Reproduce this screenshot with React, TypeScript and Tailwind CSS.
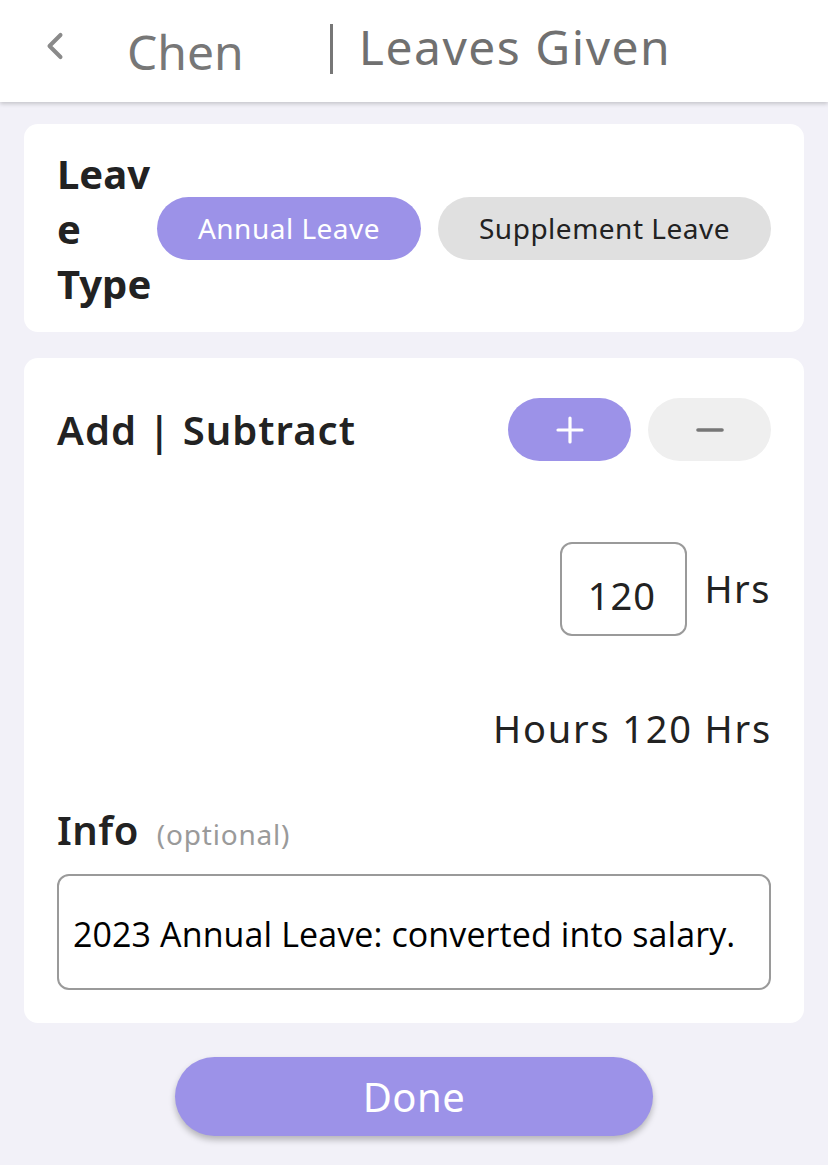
import { ChevronLeft } from "lucide-react"

export default function App() {
  const font = { fontFamily: '"Noto Sans", "Open Sans", sans-serif' }

  return (
    <div className="min-h-[1165px] w-[828px] bg-[#f2f1f8]" style={font}>
      {/* header */}
      <div className="h-[102px] bg-white shadow-[0_2px_4px_rgba(0,0,0,0.18)] flex items-center relative z-10">
        <ChevronLeft className="ml-[33px] w-[44px] h-[44px] text-[#8a8a8a] -mt-[10px]" strokeWidth={2.2} />
        <span className="ml-[50px] text-[48px] leading-none text-[#777777] mt-[2px]">Chen</span>
        <span className="ml-[86px] w-[3px] h-[50px] bg-[#777777] -mt-[4px]" />
        <span className="ml-[26px] text-[48px] leading-none tracking-[1.5px] text-[#707070] -mt-[8px]">Leaves Given</span>
      </div>

      <div className="px-[24px] pt-[22px]">
        {/* leave type */}
        <div className="bg-white rounded-[14px] h-[208px] px-[33px] flex items-center">
          <div className="w-[100px] text-[40px] font-bold leading-[55px] text-[#222222]">
            <div className="break-all">Leave</div>
            <div>Type</div>
          </div>
          <div className="flex flex-1 gap-[17px] justify-end">
            <button className="w-[264px] h-[63px] rounded-full bg-[#9c92e8] text-white text-[28px] tracking-[0.5px]">Annual Leave</button>
            <button className="w-[333px] h-[63px] rounded-full bg-[#e0e0e0] text-[#222222] text-[28px] tracking-[0.5px]">Supplement Leave</button>
          </div>
        </div>

        {/* amount */}
        <div className="mt-[26px] bg-white rounded-[14px] px-[33px] pt-[40px] pb-[33px]">
          <div className="flex items-center justify-between">
            <span className="text-[40px] font-semibold tracking-[1px] text-[#222222]">Add | Subtract</span>
            <div className="flex gap-[17px]">
              <button className="w-[123px] h-[63px] rounded-full bg-[#9c92e8] flex items-center justify-center">
                <svg width="28" height="28" viewBox="0 0 28 28">
                  <path d="M14 2v24M2 14h24" stroke="white" strokeWidth="3.2" strokeLinecap="round" />
                </svg>
              </button>
              <button className="w-[123px] h-[63px] rounded-full bg-[#efefef] flex items-center justify-center">
                <svg width="28" height="8" viewBox="0 0 28 8">
                  <path d="M2 4h24" stroke="#777777" strokeWidth="3.6" strokeLinecap="round" />
                </svg>
              </button>
            </div>
          </div>

          <div className="mt-[81px] flex justify-end items-start">
            <div className="w-[127px] h-[94px] rounded-[12px] border-2 border-[#9a9a9a] flex items-center justify-center pt-[12px] pr-[4px]">
              <span className="text-[38px] tracking-[1px] text-[#222222]">120</span>
            </div>
            <span className="ml-[17px] text-[38px] tracking-[1.5px] text-[#222222] mt-[18px]">Hrs</span>
          </div>

          <div className="mt-[62px] text-right text-[38px] tracking-[1.8px] text-[#222222] leading-[60px] -mr-[1px]">Hours 120 Hrs</div>

          <div className="mt-[42px] flex items-baseline">
            <span className="text-[40px] font-semibold tracking-[0.5px] text-[#222222]">Info</span>
            <span className="ml-[18px] text-[28px] tracking-[0.8px] text-[#9a9a9a]">(optional)</span>
          </div>

          <div className="mt-[14px] h-[116px] rounded-[12px] border-2 border-[#9a9a9a] flex items-center px-[14px] pt-[4px]">
            <span className="text-[34px] text-black tracking-[0.1px]" style={{ fontFamily: '"Open Sans", "Noto Sans", sans-serif' }}>
              2023 Annual Leave: converted into salary.
            </span>
          </div>
        </div>

        {/* done */}
        <div className="flex justify-center mt-[34px] pb-[30px]">
          <button className="w-[478px] h-[79px] rounded-full bg-[#9c92e8] text-white text-[40px] tracking-[0.5px] shadow-[0_4px_6px_rgba(0,0,0,0.25)]">
            Done
          </button>
        </div>
      </div>
    </div>
  )
}
